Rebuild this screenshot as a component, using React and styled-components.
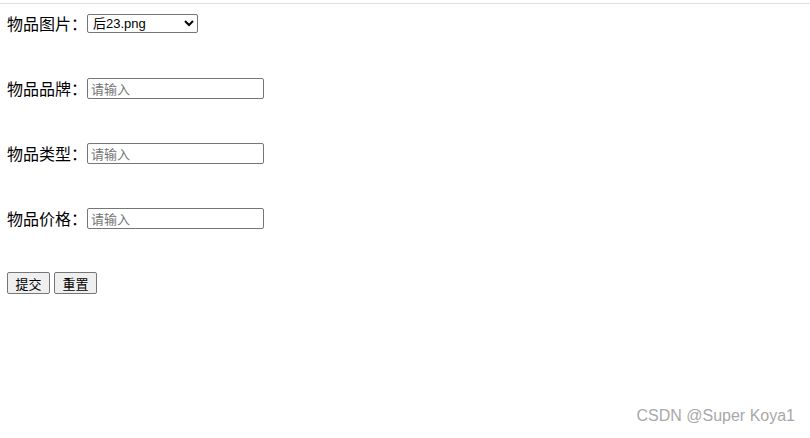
import React from "react";
import styled, { createGlobalStyle } from "styled-components";

const Global = createGlobalStyle`
  html, body { margin: 0; padding: 0; background: #fff; }
  body { font-family: "Noto Sans CJK SC", "Liberation Sans", sans-serif; }
`;

const Page = styled.div`
  position: relative;
  width: 810px;
  height: 438px;
  box-sizing: border-box;
  padding-top: 3px;
  overflow: hidden;
`;

const TopRule = styled.div`
  height: 1px;
  background: #e0e0e0;
`;

const Form = styled.form`
  display: flex;
  flex-direction: column;
  gap: 43px;
  padding: 8px 0 0 7px;
`;

const Row = styled.div`
  display: flex;
  align-items: center;
  height: 22px;
`;

const Label = styled.label`
  font-family: "Noto Sans CJK SC", sans-serif;
  font-size: 16px;
  color: #000;
  white-space: nowrap;
`;

const Select = styled.select`
  width: 111px;
  height: 19px;
  box-sizing: border-box;
  font-family: "Liberation Sans", "Noto Sans CJK SC", sans-serif;
  font-size: 13px;
  color: #000;
  border: 1px solid #767676;
  border-radius: 2px;
  background: #fff;
  padding: 0 0 0 1px;
`;

const Input = styled.input`
  width: 177px;
  height: 21px;
  box-sizing: border-box;
  font-family: "Noto Sans CJK SC", sans-serif;
  font-size: 13px;
  border: 1px solid #767676;
  border-radius: 2px;
  padding: 0 3px;
  &::placeholder { color: #757575; }
`;

const Buttons = styled.div`
  display: flex;
  gap: 4px;
  height: 22px;
  align-items: center;
`;

const Button = styled.button`
  height: 22px;
  width: 43px;
  box-sizing: border-box;
  font-family: "Noto Sans CJK SC", sans-serif;
  font-size: 13px;
  color: #000;
  background: #efefef;
  border: 1px solid #767676;
  border-radius: 2px;
  padding: 0;
`;

const Watermark = styled.div`
  position: absolute;
  right: 15px;
  top: 407px;
  font-family: "Liberation Sans", sans-serif;
  font-size: 16px;
  color: #a8a8a8;
`;

export default function App() {
  const fields = ["物品品牌", "物品类型", "物品价格"];
  return (
    <Page>
      <Global />
      <TopRule />
      <Form onSubmit={(e) => e.preventDefault()}>
        <Row>
          <Label>物品图片：</Label>
          <Select defaultValue="后23.png">
            <option>后23.png</option>
          </Select>
        </Row>
        {fields.map((f) => (
          <Row key={f}>
            <Label>{f}：</Label>
            <Input placeholder="请输入" />
          </Row>
        ))}
        <Buttons>
          <Button type="submit">提交</Button>
          <Button type="reset">重置</Button>
        </Buttons>
      </Form>
      <Watermark>CSDN @Super Koya1</Watermark>
    </Page>
  );
}
